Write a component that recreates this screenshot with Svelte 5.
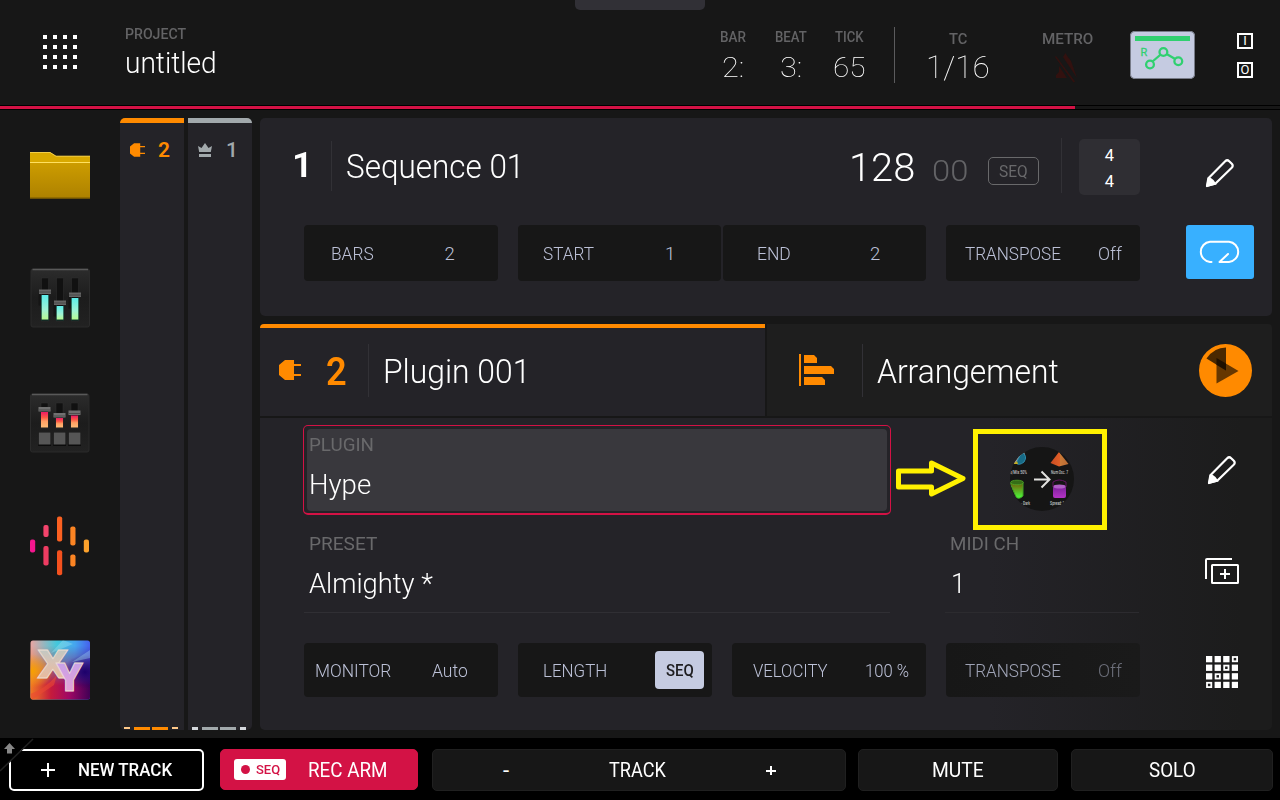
<script>
  const stripes = [
    { name: "plug", number: "2", color: "#ff8a00", tip: "#ffc98a" },
    { name: "crown", number: "1", color: "#a2a9ac", tip: "#d5d8dd" },
  ];

  const sequenceParams = [
    { label: "BARS", width: 43, value: "2", valueWidth: 10, size: 194, split: 97 },
    { label: "START", width: 51, value: "1", valueWidth: 10, size: 203, split: 101 },
    { label: "END", width: 34, value: "2", valueWidth: 10, size: 203, split: 101 },
    { label: "TRANSPOSE", width: 96, value: "Off", valueWidth: 24, size: 194, split: 134 },
  ];

  const trackParams = [
    { label: "MONITOR", width: 76, value: "Auto", valueWidth: 36, size: 194, split: 97 },
    { label: "LENGTH", width: 64, value: "SEQ", valueWidth: 28, size: 194, split: 113, chip: true },
    { label: "VELOCITY", width: 75, value: "100 %", valueWidth: 44, size: 194, split: 116 },
    { label: "TRANSPOSE", width: 96, value: "Off", valueWidth: 24, size: 194, split: 134, faded: true },
  ];

  const bars = [
    { x: 0, y: 23, h: 13, fill: "#f5168f" },
    { x: 13.4, y: 8.6, h: 12, fill: "#f3446c" },
    { x: 13.4, y: 29.4, h: 19.5, fill: "#ee3c62" },
    { x: 27, y: 0, h: 25, fill: "#fb6121" },
    { x: 27, y: 33.8, h: 25, fill: "#f4511e" },
    { x: 40.3, y: 10, h: 19, fill: "#fb8423" },
    { x: 40.3, y: 38, h: 12, fill: "#fb8423" },
    { x: 53.8, y: 23, h: 13, fill: "#fca22c" },
  ];

  const cells = Array.from({ length: 16 }, (_, i) => ({
    col: i % 4,
    row: Math.floor(i / 4),
  }));

  // squeeze or stretch a line of text to its slot
  const fit = (node, width) => {
    const natural = node.offsetWidth;
    if (natural > 0) {
      node.style.transform = `scaleX(${width / natural})`;
    }
  };
</script>

{#snippet text(value, width, kind)}
  <span class="text {kind}" style="width: {width}px"
    ><span class="inner" use:fit={width}>{value}</span></span
  >
{/snippet}

{#snippet pencil()}
  <svg class="pencil" width="30" height="30" viewBox="0 0 30 30">
    <path
      d="M3.4 20.3 20.2 3.2Q22.2 1.3 24.2 3.2L26.8 5.8Q28.6 7.8 26.7 9.8L10.5 25.5 2 28Z"
      fill="none"
      stroke="#fff"
      stroke-width="2.2"
      stroke-linejoin="round"
    />
    <path d="M3 19 1 29 11.5 26.5Q10 24 8.500 22 6 19.500 3 19Z" fill="#fff" />
  </svg>
{/snippet}

{#snippet plug()}
  <svg class="plug" viewBox="0 0 22 20">
    <path d="M6 0H15V4H22V6H15V14H22V16H15V20H6L0 15V5Z" fill="#ff8a00" />
  </svg>
{/snippet}

{#snippet params(list)}
  {#each list as param}
    <div
      class="param"
      class:faded={param.faded}
      style="width: {param.size}px; grid-template-columns: {param.split}px 1fr"
    >
      <div>{@render text(param.label, param.width, "p-label")}</div>
      <div class:chip={param.chip}>
        {@render text(param.value, param.valueWidth, param.chip ? "chip-text" : "p-label")}
      </div>
    </div>
  {/each}
{/snippet}

<main>
  <header>
    <div class="notch"></div>
    <svg class="menu" width="34" height="34" viewBox="0 0 34 34" fill="#fff">
      {#each cells as { col, row }}
        <rect x={col * 10} y={row * 10} width="4" height="4" />
      {/each}
    </svg>
    <div class="project">
      {@render text("PROJECT", 61, "small-label")}
      {@render text("untitled", 92, "project-name")}
    </div>
    <div class="clock bar">
      {@render text("BAR", 26, "clock-label")}
      {@render text("2:", 22, "clock-value")}
    </div>
    <div class="clock beat">
      {@render text("BEAT", 32, "clock-label")}
      {@render text("3:", 22, "clock-value")}
    </div>
    <div class="clock tick">
      {@render text("TICK", 28, "clock-label")}
      {@render text("65", 33, "clock-value")}
    </div>
    <div class="rule"></div>
    <div class="tc">
      {@render text("TC", 18, "small-label")}
      {@render text("1/16", 64, "tc-value")}
    </div>
    <div class="metro">
      {@render text("METRO", 51, "small-label")}
      <svg width="24" height="30" viewBox="0 0 24 30" fill="#32110f">
        <path d="M8 4 10.500 0 12.500 3.500 16 8 22 25Z" />
        <path d="M4 13 12 25H1V22L4 19Z" />
        <path d="M1 3 20 28.5 18.5 29.5 0 4Z" />
      </svg>
    </div>
    <div class="automation">
      <svg width="65" height="48" viewBox="0 0 65 48">
        <rect x="5" y="5" width="55" height="5" fill="#30d070" />
        <text x="10.5" y="25" font-size="11" fill="#30d070" stroke="#30d070" stroke-width=".3" textLength="7.5">R</text>
        <g fill="none" stroke="#30d070" stroke-width="2.3">
          <path d="M22.5 30.5 30.7 23.5M36.2 22.8 45.6 28.2" />
          <circle cx="20" cy="33.5" r="3.9" />
          <circle cx="33.4" cy="21" r="3.9" />
          <circle cx="48.3" cy="30.2" r="3.9" />
        </g>
      </svg>
    </div>
    <div class="io">
      <div class="port"><span>I</span></div>
      <div class="port"><span>O</span></div>
    </div>
  </header>
  <div class="progress"><div class="done"></div></div>

  <div class="middle">
    <nav>
      <svg width="60" height="48" viewBox="0 0 60 48">
        <defs>
          <linearGradient id="folder" x1="0" y1="0" x2="0" y2="1">
            <stop offset="0" stop-color="#cd9d00" />
            <stop offset="1" stop-color="#ad8100" />
          </linearGradient>
        </defs>
        <path d="M0 1H20L26 5H60V20H0Z" fill="#d9a900" />
        <path d="M0 1.5H20L26 5.2H60" fill="none" stroke="#f1cd4a" />
        <path d="M0 11H60V47.500H0Z" fill="url(#folder)" />
        <path d="M0 11.500H60" stroke="#ffe060" stroke-width="1.2" />
        <path d="M0 47H60" stroke="#755600" />
      </svg>

      <svg width="60" height="60" viewBox="0 0 60 60">
        <defs>
          <linearGradient id="case" x1="0" y1="0" x2="0" y2="1">
            <stop offset="0" stop-color="#2c2c2c" />
            <stop offset=".5" stop-color="#1c1c1c" />
            <stop offset="1" stop-color="#222" />
          </linearGradient>
          <linearGradient id="green" x1="0" y1="0" x2="0" y2="1">
            <stop offset="0" stop-color="#5cedeb" />
            <stop offset=".6" stop-color="#a0f3d5" />
            <stop offset="1" stop-color="#b8fa91" />
          </linearGradient>
          <linearGradient id="red" x1="0" y1="0" x2="0" y2="1">
            <stop offset="0" stop-color="#ed1965" />
            <stop offset=".35" stop-color="#fb5844" />
            <stop offset=".6" stop-color="#ffa064" />
            <stop offset="1" stop-color="#ffbd77" />
          </linearGradient>
        </defs>
        <rect x="1" y="1" width="58.500" height="58" rx="2" fill="url(#case)" stroke="#2b2b2b" />
        <path d="M2.500 1.500H58" stroke="#595959" stroke-width="1.600" />
        {#each [{ x: 15, y: 21.5 }, { x: 30, y: 32.5 }, { x: 45, y: 24.5 }] as fader}
          <rect x={fader.x - 6.5} y={fader.y + 4} width="10" height="12" fill="#151515" />
          <rect x={fader.x - 3.5} y="10" width="7" height="43" fill="#111" stroke="#303030" stroke-width=".5" />
          <rect x={fader.x - 4} y={fader.y + 6} width="8" height={46.5 - fader.y} fill="#103b31" />
          <rect x={fader.x - 3.3} y={fader.y + 5.5} width="6.600" height={46 - fader.y} fill="url(#green)" />
          <rect x={fader.x - 6} y={fader.y} width="12" height="4.500" fill="#656565" />
          <path d="M{fader.x - 6} {fader.y + 2.5}h12" stroke="#484848" />
        {/each}
      </svg>

      <svg width="60" height="60" viewBox="0 0 60 60">
        <rect x=".5" y="1" width="58.500" height="58" rx="2" fill="url(#case)" stroke="#2b2b2b" />
        <path d="M2 1.500H57.500" stroke="#595959" stroke-width="1.600" />
        {#each [{ x: 14.5, y: 14 }, { x: 29.5, y: 20 }, { x: 44.5, y: 17.5 }] as fader}
          <rect x={fader.x - 3.5} y="10" width="7" height="25" fill="#111" stroke="#303030" stroke-width=".5" />
          <rect x={fader.x - 3.5} y={fader.y + 5} width="7" height={29.5 - fader.y} fill="url(#red)" />
          <rect x={fader.x - 6} y={fader.y} width="12" height="4.500" fill="#707070" />
          <path d="M{fader.x - 6} {fader.y + 3}h12" stroke="#4d4d4d" />
          <rect x={fader.x - 6.3} y="39.500" width="12.800" height="13.500" fill="#0c0c0c" />
          <rect x={fader.x - 5.8} y="39.500" width="11.800" height="12" fill="#565656" />
        {/each}
      </svg>

      <svg width="60" height="60" viewBox="0 0 60 60">
        {#each bars as bar}
          <rect x={bar.x} y={bar.y + .5} width="5.200" height={bar.h} rx="2" fill={bar.fill} />
        {/each}
      </svg>

      <svg class="pad" width="60" height="60" viewBox="0 0 60 60">
        <defs>
          <linearGradient id="sky" x1="0" y1="0" x2="1" y2="0">
            <stop offset="0" stop-color="#eda4a0" />
            <stop offset=".45" stop-color="#43c8dc" />
            <stop offset=".75" stop-color="#45a5ee" />
            <stop offset="1" stop-color="#4560ed" />
          </linearGradient>
          <linearGradient id="ground" x1="0" y1="0" x2="1" y2="0">
            <stop offset="0" stop-color="#f27a23" />
            <stop offset=".35" stop-color="#c51b3c" />
            <stop offset=".65" stop-color="#a00865" />
            <stop offset="1" stop-color="#400055" />
          </linearGradient>
          <linearGradient id="fade" x1="0" y1="0" x2="0" y2="1">
            <stop offset=".1" stop-color="#000" />
            <stop offset=".75" stop-color="#fff" />
          </linearGradient>
          <linearGradient id="letter-x" x1="0" y1="0" x2="0" y2="1">
            <stop offset="0" stop-color="#a9cfd2" />
            <stop offset=".5" stop-color="#d9c2b4" />
            <stop offset="1" stop-color="#f4b48c" />
          </linearGradient>
          <linearGradient id="letter-y" x1="0" y1="0" x2="0" y2="1">
            <stop offset="0" stop-color="#b9a2f2" />
            <stop offset="1" stop-color="#f0a0cf" />
          </linearGradient>
          <mask id="lower"><rect width="60" height="60" fill="url(#fade)" /></mask>
          <radialGradient id="amber"><stop stop-color="#f7a000" /><stop offset="1" stop-color="#f7a000" stop-opacity="0" /></radialGradient>
          <radialGradient id="navy"><stop stop-color="#1d006b" /><stop offset="1" stop-color="#1d006b" stop-opacity="0" /></radialGradient>
          <clipPath id="tile"><rect x=".5" y=".5" width="59.500" height="59" rx="2.500" /></clipPath>
        </defs>
        <g clip-path="url(#tile)">
          <rect width="60" height="60" fill="url(#sky)" />
          <rect width="60" height="60" fill="url(#ground)" mask="url(#lower)" />
          <ellipse cx="2" cy="31" rx="21" ry="17" fill="url(#amber)" />
          <ellipse cx="55" cy="32" rx="22" ry="17" fill="url(#navy)" />
          <path d="M0 54Q14 50 27 35L24 45 2 60Z" fill="#e94834" opacity=".6" />
          <path d="M33 0 21 13 43 4ZM60 10 42 22 60 18Z" fill="#a5e5f3" opacity=".35" />
        </g>
        <g class="xy" stroke="#eedfd2" stroke-width=".8">
          <text x="7.500" y="38" font-size="39.500" fill="url(#letter-x)" textLength="31" lengthAdjust="spacingAndGlyphs">X</text>
          <text x="26" y="50.500" font-size="38.500" fill="url(#letter-y)" textLength="27" lengthAdjust="spacingAndGlyphs">Y</text>
        </g>
      </svg>
    </nav>

    {#each stripes as stripe}
      <div class="stripe {stripe.name}" style="--tone: {stripe.color}; --tip: {stripe.tip}">
        <div class="stripe-head">
          {#if stripe.name === "plug"}
            {@render plug()}
          {:else}
            <svg width="14" height="14" viewBox="0 0 14 14" fill="#a2a9ac">
              <path d="M0 3 3.500 5 7 0 10.500 5 14 3 12.800 9H1.200Z" />
              <rect x="1" y="11" width="12" height="3" />
            </svg>
          {/if}
          {@render text(stripe.number, 12, "stripe-number")}
        </div>
        <div class="meter"><i></i><b></b><b></b><i></i></div>
      </div>
    {/each}

    <div class="panels">
      <section class="sequence">
        <div class="sequence-top">
          {@render text("1", 21, "seq-number")}
          <div class="line"></div>
          {@render text("Sequence 01", 178, "title")}
          {@render text("128", 66, "tempo")}
          {@render text("00", 36, "tempo-rest")}
          <div class="seq-tag">{@render text("SEQ", 29, "seq-text")}</div>
          <div class="line second"></div>
          <div class="signature"><span>4</span><span>4</span></div>
          {@render pencil()}
        </div>
        <div class="param-row">
          {@render params(sequenceParams)}
          <div class="loop">
            <svg width="42" height="26" viewBox="0 0 42 26" fill="none" stroke="#fff" stroke-width="2" stroke-linecap="round" stroke-linejoin="round">
              <path d="M12.500 23H11A10.200 10.200 0 0 1 11 2.700H30A10.200 10.200 0 0 1 30 23H20.500L29 15" />
            </svg>
          </div>
        </div>
      </section>

      <section class="track">
        <div class="tabs">
          <div class="tab active">
            {@render plug()}
            {@render text("2", 21, "track-number")}
            <div class="line"></div>
            {@render text("Plugin 001", 147, "title")}
          </div>
          <div class="tab other">
            <svg width="35" height="32" viewBox="0 0 35 32" fill="#ff8a00">
              <rect width="2" height="32" />
              <path d="M5 1H15L18 4V9H5ZM5 12H32L35 15V20H5ZM5 23H23L26 26V31H5Z" />
            </svg>
            <div class="line"></div>
            {@render text("Arrangement", 182, "title")}
            <svg class="pie" width="54" height="54" viewBox="0 0 54 54">
              <circle cx="26.500" cy="26.500" r="26.500" fill="#ff8a00" />
              <path d="M17.500 14 39.500 27 17.500 39.500Z" fill="#663700" />
              <path d="M27 26.500V3.500Q15 3.500 7.500 14.500Z" fill="#4a2800" />
              <path d="M17.500 14 27 19.600V26.500L17.500 20.700Z" fill="#1e1000" />
            </svg>
          </div>
        </div>

        <div class="track-body">
          <div class="fields">
            <div class="field-row first">
              <div class="focus">
                <div class="field plugin">
                  {@render text("PLUGIN", 65, "field-label")}
                  {@render text("Hype", 62, "field-value")}
                </div>
              </div>
              <svg class="arrow" width="74" height="44" viewBox="0 0 74 44">
                <path d="M4.500 13H37.500V5L69 20.500 37.500 36V29H4.500Z" fill="none" stroke="#fff100" stroke-width="5" stroke-linejoin="round" />
              </svg>
              <div class="highlight">
                <svg width="64" height="64" viewBox="0 0 64 64">
                  <defs>
                    <clipPath id="disc"><circle cx="32" cy="32" r="32" /></clipPath>
                    <linearGradient id="lime" x1="0" y1="0" x2="0" y2="1">
                      <stop offset="0" stop-color="#725b08" /><stop offset="1" stop-color="#49ff3c" />
                    </linearGradient>
                    <linearGradient id="violet" x1="0" y1="0" x2="0" y2="1">
                      <stop offset="0" stop-color="#7c209b" /><stop offset="1" stop-color="#b333c5" />
                    </linearGradient>
                    <linearGradient id="cone"><stop stop-color="#c94b21" /><stop offset=".5" stop-color="#df5e28" /><stop offset=".55" stop-color="#c97937" /><stop offset="1" stop-color="#b86a34" /></linearGradient>
                  </defs>
                  <g clip-path="url(#disc)">
                    <rect width="64" height="64" fill="#151515" />
                    <circle cx="7" cy="9" r="8" fill="#b0a7a5" />
                    <path d="M12 5Q18 9 14 15 9 19 6 16Z" fill="#176b87" stroke="#318baa" />
                    <path d="M3 17H8L7 14Z" fill="#c3ac20" />
                    <path d="M49 5 40.500 16 49 19.500 58.500 17Z" fill="url(#cone)" />
                    <path d="M0 36H13V49Q9 53 6 50Z" fill="url(#lime)" stroke="#3ea225" />
                    <ellipse cx="7" cy="35.500" rx="6.500" ry="2.300" fill="#356d16" stroke="#55b12b" stroke-width=".7" />
                    <rect x="43" y="39" width="13" height="12" rx="2" fill="url(#violet)" />
                    <ellipse cx="49.500" cy="39.500" rx="6.500" ry="2" fill="#b15fc6" />
                    <path d="M43 40V35Q49 31 56 35V40" fill="none" stroke="#641362" />
                    <g class="tiny" fill="#c5c5c5">
                      <text x="0" y="27" textLength="17" lengthAdjust="spacingAndGlyphs">x/Mix 50%</text>
                      <text x="41" y="27" textLength="17" lengthAdjust="spacingAndGlyphs">Num Osc. 7</text>
                      <text x="11" y="58" textLength="9" lengthAdjust="spacingAndGlyphs">- Dark</text>
                      <text x="40" y="58" textLength="14" lengthAdjust="spacingAndGlyphs">Spread: "</text>
                    </g>
                    <path d="M24 32.500H39M31.500 24.500 39.500 32.500 31.500 40.500" fill="none" stroke="#e2e2df" stroke-width="2" />
                  </g>
                </svg>
              </div>
            </div>

            <div class="field-row second-row">
              <div class="field preset">
                {@render text("PRESET", 68, "field-label")}
                {@render text("Almighty *", 124, "field-value")}
              </div>
              <div class="field midi">
                {@render text("MIDI CH", 69, "field-label")}
                {@render text("1", 15, "field-value")}
              </div>
            </div>
            <div class="param-row">{@render params(trackParams)}</div>
          </div>

          <div class="tools">
            {@render pencil()}
            <svg width="34" height="26" viewBox="0 0 34 26" fill="none" stroke="#fff" stroke-width="2">
              <path d="M1 21V2Q1 1 2 1H27" />
              <rect x="7" y="7" width="26" height="18" rx=".5" />
              <path d="M15 16H25M20 11V21" />
            </svg>
            <svg width="32" height="32" viewBox="0 0 32 32">
              {#each cells as { col, row }}
                {#if col + row === 3}
                  <rect x={col * 8.6 + 1} y={row * 8.6 + 1} width="4.300" height="4.300" fill="none" stroke="#fff" stroke-width="1.800" />
                {:else}
                  <rect x={col * 8.6} y={row * 8.6} width="6.300" height="6.300" fill="#fff" />
                {/if}
              {/each}
            </svg>
          </div>
        </div>
      </section>
    </div>
  </div>

  <footer>
    <svg class="corner" width="36" height="36" viewBox="0 0 36 36">
      <path d="M0 0H33L0 33Z" fill="#000" />
      <path d="M0 33 33 1" stroke="#222" stroke-width="1.500" />
      <path d="M9.500 5 15 11H12V15.500H7V11H4Z" fill="#868686" />
    </svg>
    <div class="button new">
      <svg width="14" height="14" viewBox="0 0 14 14" stroke="#fff" stroke-width="2"><path d="M0 7H14M7 0V14" /></svg>
      {@render text("NEW TRACK", 94, "new-text")}
    </div>
    <div class="button rec">
      <div class="rec-chip"><i></i>{@render text("SEQ", 24, "rec-seq")}</div>
      {@render text("REC ARM", 80, "button-text")}
    </div>
    <div class="button step">
      <span class="sign">-</span>
      {@render text("TRACK", 57, "button-text")}
      <svg width="10" height="10" viewBox="0 0 10 10" stroke="#fff" stroke-width="2"><path d="M0 6H10M5 1V10" /></svg>
    </div>
    <div class="button mute">{@render text("MUTE", 52, "button-text")}</div>
    <div class="button solo">{@render text("SOLO", 47, "button-text")}</div>
  </footer>
</main>

<style>
  :global(body) {
    margin: 0;
    background: #171717;
  }

  * {
    box-sizing: border-box;
  }

  main {
    width: 1280px;
    height: 800px;
    overflow: hidden;
    display: flex;
    flex-direction: column;
    background: #171717;
    color: #fff;
    font-family: Roboto, "Liberation Sans", sans-serif;
  }

  svg {
    display: block;
    flex: none;
  }

  .text {
    display: block;
    flex: none;
    white-space: nowrap;
  }

  .inner {
    display: inline-block;
    transform-origin: 0 50%;
  }

  header {
    position: relative;
    height: 105px;
    display: flex;
    align-items: flex-start;
  }

  .notch {
    position: absolute;
    left: 575px;
    top: 0;
    width: 130px;
    height: 10px;
    border-radius: 0 0 5px 5px;
    background: #313036;
  }

  .menu {
    margin: 35px 0 0 43px;
  }

  .project {
    width: 594px;
    margin: 24px 0 0 48px;
  }

  .small-label {
    font-size: 15.5px;
    line-height: 20px;
    font-weight: 500;
    color: #636365;
  }

  .project-name {
    font-size: 29px;
    font-weight: 350;
    line-height: 36px;
    margin-top: 1px;
  }

  .clock {
    display: flex;
    flex-direction: column;
    align-items: center;
    width: 58px;
    margin-top: 27px;
  }

  .clock.bar {
    width: 28px;
  }

  .clock.beat {
    margin-left: 15px;
  }

  .clock-label {
    font-size: 14px;
    line-height: 20px;
    font-weight: 500;
    color: #636365;
  }

  .clock-value {
    font-size: 28px;
    font-weight: 250;
    line-height: 36px;
    margin-top: 3px;
  }

  .rule {
    width: 1px;
    height: 56px;
    margin: 27px 0 0 16px;
    background: #5b5b5d;
  }

  .tc {
    width: 126px;
    margin-top: 29px;
    display: flex;
    flex-direction: column;
    align-items: center;
  }

  .tc-value {
    font-size: 32px;
    font-weight: 250;
    line-height: 36px;
  }

  .metro {
    margin: 29px 0 0 21px;
  }

  .metro svg {
    margin: 4px 0 0 13px;
  }

  .automation {
    width: 65px;
    height: 48px;
    margin: 31px 0 0 37px;
    border-radius: 5px;
    background: #c5cbe1;
    box-shadow: inset 0 0 0 1px #777b88;
  }

  .io {
    margin: 33px 0 0 42px;
    display: flex;
    flex-direction: column;
    gap: 13px;
  }

  .port {
    width: 16px;
    height: 16px;
    border: 2px solid #fff;
    display: flex;
    align-items: center;
    justify-content: center;
    font-size: 13px;
    line-height: 12px;
  }

  .progress {
    height: 5px;
    border: solid #000;
    border-width: 1px 0;
  }

  .done {
    width: 1075px;
    height: 3px;
    background: #d31245;
  }

  .middle {
    height: 628px;
    display: flex;
    padding-top: 8px;
  }

  nav {
    width: 120px;
    padding: 33px 0 0 30px;
    display: flex;
    flex-direction: column;
  }

  nav svg:nth-child(2) {
    margin-top: 69px;
  }

  nav svg:nth-child(3) {
    margin-top: 65px;
  }

  nav svg:nth-child(4) {
    margin-top: 63px;
  }

  nav svg:nth-child(5) {
    margin-top: 64px;
  }

  .pad {
    overflow: visible;
  }

  .xy {
    font-family: "Open Sans", Roboto, sans-serif;
    font-weight: 800;
  }

  .stripe {
    width: 64px;
    height: 612px;
    margin-right: 4px;
    border-top: 5px solid var(--tone);
    border-radius: 5px 0 0 5px;
    background: #242328;
    display: flex;
    flex-direction: column;
    justify-content: space-between;
  }

  .stripe.crown {
    margin-right: 8px;
    border-radius: 0 5px 5px 0;
  }

  .stripe-head {
    padding: 12px 0 0 10px;
    display: flex;
    align-items: center;
    color: var(--tone);
  }

  .stripe-head .plug {
    width: 15px;
    height: 14px;
  }

  .stripe-number {
    font-size: 21px;
    line-height: 28px;
    font-weight: 600;
    margin-left: 13px;
    padding-top: 1px;
  }

  .crown .stripe-number {
    margin-left: 14px;
    font-weight: 500;
  }

  .meter {
    display: flex;
    gap: 2px;
    padding-left: 4px;
  }

  .meter i {
    width: 6px;
    height: 3px;
    background: var(--tip);
  }

  .meter b {
    width: 16px;
    height: 3px;
    background: var(--tone);
  }

  .plug .meter i {
    height: 2px;
  }

  .meter i:first-child {
    margin-right: 2px;
  }

  .meter i:last-child {
    margin-left: 2px;
  }

  .panels {
    width: 1012px;
  }

  .sequence {
    height: 198px;
    border-radius: 5px;
    background: #242328;
  }

  .sequence-top {
    height: 107px;
    display: flex;
    align-items: flex-start;
    padding-top: 21px;
  }

  .line {
    width: 1px;
    height: 50px;
    margin-top: 2px;
    background: #323136;
    flex: none;
  }

  .seq-number {
    font-size: 35px;
    font-weight: 600;
    line-height: 54px;
    margin-left: 32px;
    margin-right: 18px;
  }

  .title {
    font-size: 32.5px;
    font-weight: 350;
    line-height: 56px;
    margin-left: 14px;
  }

  .tempo {
    font-size: 38px;
    font-weight: 350;
    line-height: 59px;
    margin-left: 325px;
  }

  .tempo-rest {
    font-size: 30px;
    font-weight: 350;
    line-height: 63px;
    color: #636366;
    margin-left: 17px;
  }

  .seq-tag {
    width: 51px;
    height: 28px;
    margin: 18px 22px 0 20px;
    display: flex;
    align-items: center;
    justify-content: center;
    border: 1px solid #69696b;
    border-radius: 5px;
    color: #69696b;
  }

  .seq-text {
    font-size: 16px;
    line-height: 24px;
    padding-top: 1px;
  }

  .line.second {
    height: 55px;
    margin-top: -1px;
  }

  .signature {
    width: 61px;
    height: 56px;
    margin-left: 17px;
    padding-top: 4px;
    border-radius: 5px;
    background: #2f2e33;
    display: flex;
    flex-direction: column;
    align-items: center;
    font-size: 16.5px;
    line-height: 26px;
  }

  .sequence-top .pencil {
    margin: 19px 0 0 65px;
  }

  .param-row {
    display: flex;
    gap: 20px;
    margin-left: 44px;
  }

  .param {
    flex: none;
    height: 56px;
    display: grid;
    border-radius: 4px;
    background: #171717;
    color: #bcc1d7;
  }

  .sequence .param:nth-child(3) {
    margin-left: -18px;
  }

  .param div {
    display: flex;
    align-items: center;
    justify-content: center;
  }

  .p-label {
    font-size: 18.5px;
    font-weight: 350;
    line-height: 30px;
    padding-top: 2px;
  }

  .param .chip {
    width: 49px;
    height: 38px;
    margin: 8px 0 0 24px;
    border-radius: 4px;
    background: #c5cbe1;
    color: #1e1e20;
  }

  .chip-text {
    font-size: 16px;
    font-weight: 500;
    padding-top: 1px;
  }

  .loop {
    width: 68px;
    height: 54px;
    margin-left: 26px;
    border-radius: 3px;
    background: #38b0ff;
    display: flex;
    align-items: center;
    justify-content: center;
  }

  .track {
    margin-top: 8px;
  }

  .tabs {
    height: 92px;
    display: flex;
    gap: 2px;
  }

  .tab {
    width: 505px;
    display: flex;
    align-items: flex-start;
  }

  .tab.active {
    border-top: 4px solid #ff8a00;
    border-radius: 4px 0 0 0;
    padding: 16px 0 0 19px;
    background: #242328;
  }

  .active .plug {
    width: 22px;
    height: 20px;
    margin-top: 16px;
  }

  .track-number {
    font-size: 38px;
    font-weight: 600;
    line-height: 57px;
    color: #ff8a00;
    margin-left: 25px;
    margin-right: 21px;
  }

  .tab .line {
    height: 53px;
    margin-top: 0;
  }

  .tab .title {
    line-height: 57px;
    margin-left: 14px;
  }

  .tab.other {
    padding: 20px 0 0 32px;
    border-radius: 0 4px 0 0;
    background: #1e1e1e;
  }

  .other svg:first-child {
    margin: 10px 28px 0 0;
  }

  .other .pie {
    margin: 0 0 0 140px;
  }

  .track-body {
    height: 312px;
    margin-top: 2px;
    border-radius: 0 0 5px 5px;
    background: linear-gradient(90deg, #242328 72%, #1c1c1c 97%);
    display: flex;
  }

  .fields {
    width: 880px;
    padding-top: 7px;
  }

  .field-row {
    display: flex;
    align-items: flex-start;
  }

  .focus {
    width: 588px;
    height: 90px;
    margin-left: 43px;
    padding: 3px;
    border: 1px solid #d31245;
    border-bottom-width: 2px;
    border-radius: 5px;
  }

  .field.plugin {
    height: 82px;
    width: 580px;
    border-radius: 4px;
    background: #39383d;
    padding: 6px 0 0 2px;
  }

  .field-label {
    font-size: 18.5px;
    line-height: 20px;
    font-weight: 450;
    color: #69696b;
  }

  .field-value {
    font-size: 28px;
    font-weight: 350;
    line-height: 36px;
    margin-top: 12px;
  }

  .arrow {
    margin: 33px 0 0 3px;
  }

  .highlight {
    width: 134px;
    height: 101px;
    margin: 4px 0 0 5px;
    padding: 0 0 1px 3px;
    border: 5px solid #fff100;
    display: flex;
    align-items: center;
    justify-content: center;
    flex: none;
  }

  .tiny {
    font-size: 4.5px;
    font-weight: 500;
  }

  .second-row {
    margin-top: 4px;
  }

  .preset {
    width: 586px;
    margin: 0 55px 0 44px;
    padding: 0 0 10px 5px;
    border-bottom: 1px solid #302f34;
  }

  .midi {
    width: 194px;
    padding: 0 0 10px 5px;
    border-bottom: 1px solid #2c2b2f;
  }

  .midi .field-value {
    margin-left: 1px;
  }

  .fields .param-row {
    margin-top: 30px;
  }

  .fields .param {
    height: 54px;
  }

  .param.faded {
    background: linear-gradient(90deg, #171717, #1a1a1a);
  }

  .faded div:first-child {
    opacity: 0.82;
  }

  .faded div:last-child {
    opacity: 0.5;
  }

  .tools {
    width: 132px;
    display: flex;
    flex-direction: column;
    align-items: center;
    padding: 37px 0 0 32px;
  }

  .tools svg:nth-child(2) {
    margin-top: 73px;
  }

  .tools svg:nth-child(3) {
    margin-top: 72px;
  }

  footer {
    position: relative;
    height: 62px;
    padding: 11px 0 0 9px;
    display: flex;
    background: #000;
  }

  .corner {
    position: absolute;
    left: 0;
    top: 0;
    z-index: 1;
  }

  .button {
    flex: none;
    height: 41px;
    display: flex;
    align-items: center;
    justify-content: center;
    border-radius: 5px;
    border: 1px solid #202020;
    background: #171717;
  }

  .button.new {
    width: 195px;
    height: 42px;
    gap: 23px;
    padding-right: 1px;
    border: 2px solid #fff;
    background: #000;
  }

  .new-text {
    font-size: 18px;
    font-weight: 500;
    line-height: 24px;
  }

  .button.rec {
    width: 198px;
    margin-left: 16px;
    padding-right: 16px;
    gap: 22px;
    border-color: #d31245;
    background: #d31245;
  }

  .rec-chip {
    width: 52px;
    height: 21px;
    display: flex;
    align-items: center;
    justify-content: center;
    gap: 6px;
    border-radius: 3px;
    background: #fff;
    color: #d31245;
  }

  .rec-chip i {
    width: 9px;
    height: 9px;
    border-radius: 50%;
    background: #d31245;
  }

  .rec-seq {
    font-size: 13.5px;
    font-weight: 500;
    line-height: 21px;
  }

  .button-text {
    font-size: 20px;
    font-weight: 400;
    line-height: 24px;
  }

  .button.step {
    width: 414px;
    height: 42px;
    margin-left: 14px;
    padding: 0 69px 0 70px;
    justify-content: space-between;
  }

  .step .text {
    margin-right: 3px;
  }

  .sign {
    width: 8px;
    font-size: 22px;
  }

  .button.mute {
    width: 200px;
    height: 42px;
    margin-left: 12px;
  }

  .button.solo {
    width: 202px;
    height: 42px;
    margin-left: 13px;
  }
</style>
